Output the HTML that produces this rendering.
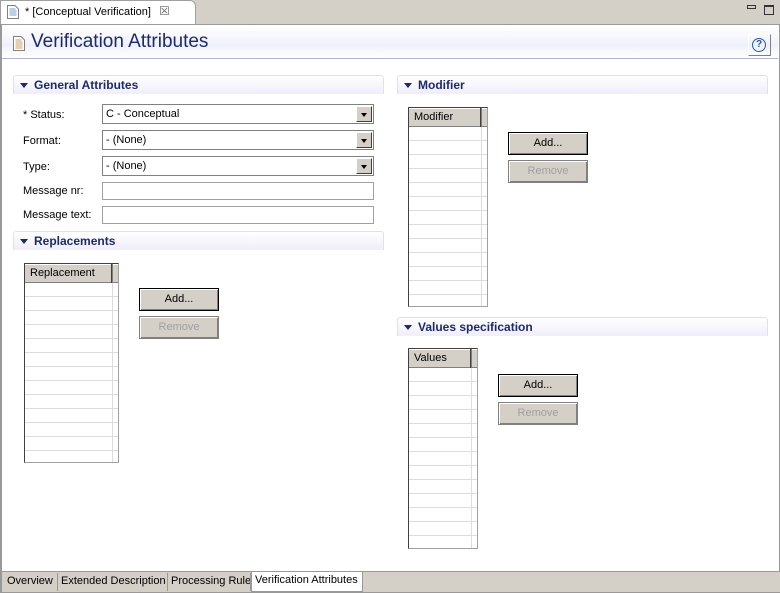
<!DOCTYPE html>
<html><head><style>
*{margin:0;padding:0;box-sizing:border-box;white-space:nowrap}
body{width:780px;height:593px;position:relative;background:#d4d0c8;font-family:"Liberation Sans",Tahoma,sans-serif;font-size:11px;color:#000;overflow:hidden}
.a{position:absolute}
.sec{position:absolute;height:19px;border:1px solid #e2e0ee;border-bottom:none;border-radius:3px 3px 0 0;background:linear-gradient(#fff,#efeefa);font-weight:bold;color:#1c2a6c;font-size:12px;line-height:18px;padding-left:20px}
.sec:before{content:"";position:absolute;left:6px;top:7px;border-left:4px solid transparent;border-right:4px solid transparent;border-top:5px solid #1c2a6c}
.lbl{position:absolute;left:23px}
.combo{position:absolute;left:102px;width:272px;height:20px;border:1px solid #808080;background:#fff;padding-left:3px;line-height:19px}
.combo b{position:absolute;right:1px;top:1px;width:16px;height:16px;background:#d4d0c8;border:1px solid;border-color:#fff #404040 #404040 #fff}
.combo b:after{content:"";position:absolute;left:4px;top:6px;border-left:3px solid transparent;border-right:3px solid transparent;border-top:4px solid #000}
.txt{position:absolute;left:102px;width:272px;height:18px;border:1px solid #a0a0a0;background:#fff}
.tbl{position:absolute;border:1px solid #a0a0a0;border-left:1px solid #404040;border-top:1px solid #404040;background:#fff;overflow:hidden}
.tbl .hb{position:absolute;left:0;top:0;right:0;height:19px;background:#d4d0c8;border-bottom:1px solid #808080;border-top:1px solid #fff}
.tbl .h{position:absolute;left:0;top:0;height:19px;border-right:1px solid #404040;box-shadow:1px 0 #808080;padding-left:5px;padding-top:1px;line-height:17px}
.tbl .rows{position:absolute;left:0;top:19px;right:0;bottom:0;background:repeating-linear-gradient(#fff 0,#fff 13px,#dcdcdc 13px,#dcdcdc 14px)}
.tbl .v{position:absolute;top:0;bottom:0;width:1px;background:#dcdcdc}
.btn{position:absolute;width:80px;height:23px;background:#d4d0c8;border:1px solid #000;text-align:center;line-height:21px;box-shadow:inset 1px 1px #fff,inset -1px -1px #808080}
.dis{color:#a0a0a0;border-color:#808080}
</style></head><body>
<div class="a" style="left:0;top:0;width:196px;height:25px;background:#fff;border:1px solid #a0a0a0;border-bottom:none;border-radius:0 6px 0 0"></div>
<svg class="a" style="left:7px;top:5px" width="12" height="14"><path d="M0.5 0.5H8L11.5 4V13.5H0.5Z" fill="#fff" stroke="#808080"/><path d="M2.5 4h6M2.5 6h7M2.5 8h7M2.5 10h7" stroke="#7aa0c8"/></svg>
<div class="a" style="left:25px;top:6px;font-size:11px">* [Conceptual Verification]</div>
<div class="a" style="left:159px;top:4px;font-size:12px;color:#666">&#x2612;</div>
<div class="a" style="left:747px;top:5px;width:9px;height:4px;border:1px solid #333"></div>
<div class="a" style="left:764px;top:5px;width:10px;height:10px;border:1px solid #333;border-top-width:2px"></div>
<div class="a" style="left:0;top:24px;width:780px;height:548px;background:#fff;border:1px solid #999;border-left:2px solid #999"></div>
<div class="a" style="left:2px;top:26px;width:776px;height:33px;background:linear-gradient(#fff,#f0f0fb 60%,#fff);border-bottom:1px solid #b0b4cc"></div>
<svg class="a" style="left:13px;top:36px" width="12" height="15"><path d="M0.5 0.5H8L11.5 4V14.5H0.5Z" fill="#fff" stroke="#808080"/><path d="M2.5 4h6M2.5 6h7M2.5 8h7M2.5 10h7M2.5 12h7" stroke="#c8a060"/></svg>
<div class="a" style="left:31px;top:31px;font-size:19px;color:#1c2a6c">Verification Attributes</div>
<div class="a" style="left:748px;top:34px;width:23px;height:22px;border:1px solid;border-color:#fff #808080 #808080 #fff"></div>
<div class="a" style="left:752px;top:38px;width:14px;height:14px;border:1.5px solid #2a5a9a;border-radius:50%;text-align:center;font-weight:bold;font-size:10px;line-height:11px;color:#2a5a9a">?</div>

<div class="sec" style="left:13px;top:75px;width:371px">General Attributes</div>
<div class="lbl" style="top:109px">* Status:</div>
<div class="combo" style="top:104px">C - Conceptual<b></b></div>
<div class="lbl" style="top:135px">Format:</div>
<div class="combo" style="top:130px">- (None)<b></b></div>
<div class="lbl" style="top:161px">Type:</div>
<div class="combo" style="top:156px">- (None)<b></b></div>
<div class="lbl" style="top:185px">Message nr:</div>
<div class="txt" style="top:182px"></div>
<div class="lbl" style="top:209px">Message text:</div>
<div class="txt" style="top:206px"></div>

<div class="sec" style="left:13px;top:231px;width:371px">Replacements</div>
<div class="tbl" style="left:24px;top:263px;width:95px;height:200px"><div class="rows"></div><div class="v" style="left:87px"></div><div class="hb"></div><div class="h" style="width:87px">Replacement</div></div>
<div class="btn" style="left:139px;top:288px">Add...</div>
<div class="btn dis" style="left:139px;top:316px">Remove</div>

<div class="sec" style="left:397px;top:75px;width:371px">Modifier</div>
<div class="tbl" style="left:408px;top:107px;width:80px;height:200px"><div class="rows"></div><div class="v" style="left:72px"></div><div class="hb"></div><div class="h" style="width:72px">Modifier</div></div>
<div class="btn" style="left:508px;top:132px">Add...</div>
<div class="btn dis" style="left:508px;top:160px">Remove</div>

<div class="sec" style="left:397px;top:317px;width:371px">Values specification</div>
<div class="tbl" style="left:408px;top:348px;width:70px;height:201px"><div class="rows"></div><div class="v" style="left:62px"></div><div class="hb"></div><div class="h" style="width:62px">Values</div></div>
<div class="btn" style="left:498px;top:374px">Add...</div>
<div class="btn dis" style="left:498px;top:402px">Remove</div>

<div class="a" style="left:0;top:572px;width:780px;height:21px;background:#d4d0c8;border-left:2px solid #999;border-bottom:1px solid #999"></div>
<div class="a" style="left:3px;top:573px;width:55px;height:18px;line-height:16px;padding-left:4px;border-right:1px solid #999">Overview</div>
<div class="a" style="left:58px;top:573px;width:110px;height:18px;line-height:16px;padding-left:3px;border-right:1px solid #999">Extended Description</div>
<div class="a" style="left:168px;top:573px;width:83px;height:18px;line-height:16px;padding-left:3px;border-right:1px solid #999;overflow:hidden">Processing Rule</div>
<div class="a" style="left:251px;top:572px;width:112px;height:20px;background:#fff;line-height:17px;padding-left:3px;border:1px solid #999;border-top:none">Verification Attributes</div>
</body></html>
